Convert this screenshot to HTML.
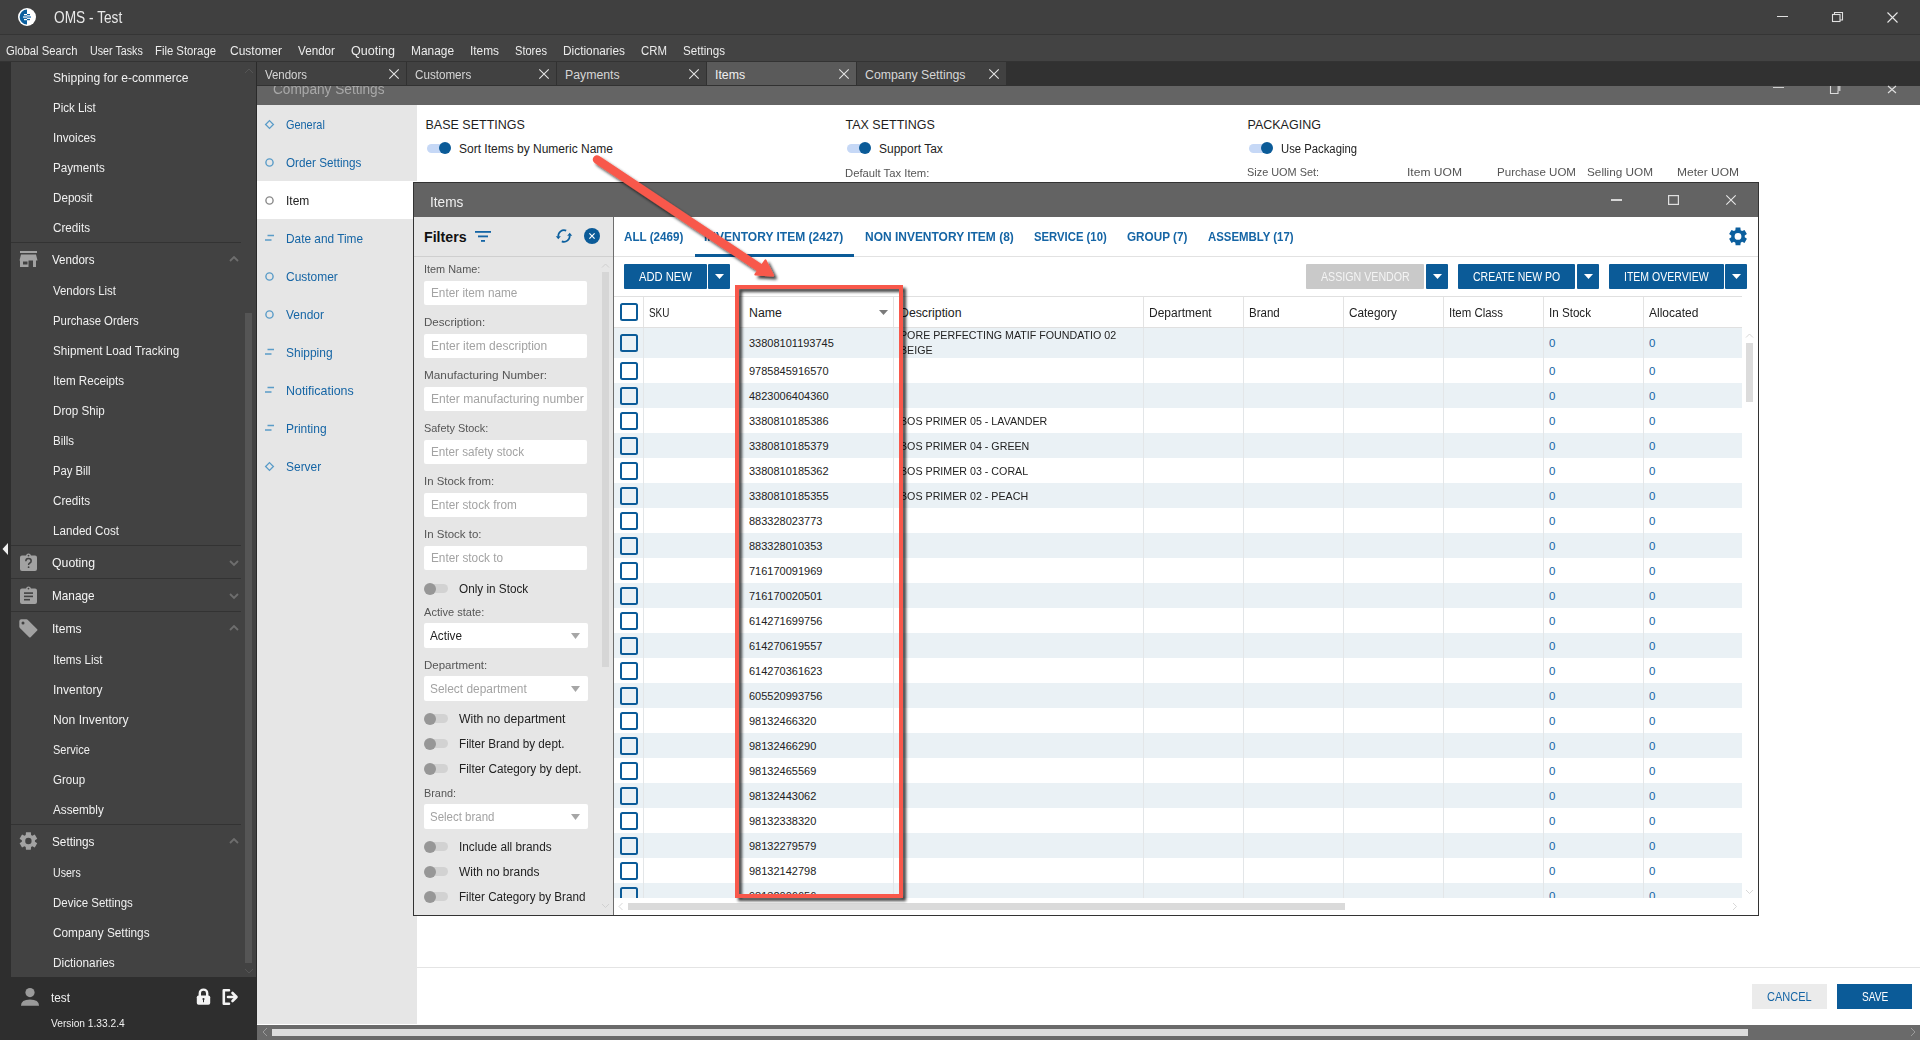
<!DOCTYPE html><html><head><meta charset="utf-8"><style>
html,body{margin:0;padding:0;width:1920px;height:1040px;overflow:hidden;background:#fff;}
body{position:relative;font-family:"Liberation Sans",sans-serif;}
.t{position:absolute;white-space:nowrap;line-height:20px;height:20px;}
.b{position:absolute;}
svg{position:absolute;overflow:visible;}
</style></head><body>
<div class="b" style="left:0px;top:0px;width:1920px;height:34px;background:#404040;"></div>
<div class="b" style="left:0px;top:34px;width:1920px;height:1px;background:#353535;"></div>
<svg style="left:18px;top:8px" width="18" height="18" viewBox="0 0 18 18"><circle cx="9" cy="9" r="9" fill="#ffffff"/><path d="M9 1.6 A7.4 7.4 0 0 0 9 16.4 Z" fill="#0b5f9e"/><rect x="6" y="6" width="3" height="1.3" fill="#fff"/><rect x="9" y="6" width="3" height="1.3" fill="#0b5f9e"/><rect x="5" y="8.3" width="4" height="1.5" fill="#c9dcec"/><rect x="9" y="8.3" width="4" height="1.5" fill="#3f86c0"/><rect x="6" y="10.9" width="3" height="1.3" fill="#fff"/><rect x="9" y="10.9" width="3" height="1.3" fill="#0b5f9e"/></svg>
<div class="t " style="left:54px;top:8.40px;font-size:15.6px;color:#e8e8e8;font-weight:normal;transform:scaleX(0.8785);transform-origin:0 0;">OMS - Test</div>
<div class="b" style="left:1777px;top:16px;width:11px;height:1.2px;background:#e0e0e0;"></div>
<svg style="left:1832px;top:12px" width="11" height="10"><rect x="0.5" y="2.5" width="7.5" height="7" fill="none" stroke="#e0e0e0" stroke-width="1.1"/><path d="M2.5 2.5 V0.5 H10.5 V8 H8" fill="none" stroke="#e0e0e0" stroke-width="1.1"/></svg>
<svg style="left:1887px;top:12px" width="11" height="11"><path d="M0.5 0.5 L10.5 10.5 M10.5 0.5 L0.5 10.5" stroke="#e8e8e8" stroke-width="1.1"/></svg>
<div class="b" style="left:0px;top:35px;width:1920px;height:26px;background:#434343;"></div>
<div class="b" style="left:0px;top:61px;width:1920px;height:1px;background:#333;"></div>
<div class="t " style="left:6px;top:41.10px;font-size:12.5px;color:#ececec;font-weight:normal;transform:scaleX(0.9026);transform-origin:0 0;">Global Search</div>
<div class="t " style="left:90px;top:41.10px;font-size:12.5px;color:#ececec;font-weight:normal;transform:scaleX(0.8574);transform-origin:0 0;">User Tasks</div>
<div class="t " style="left:155px;top:41.10px;font-size:12.5px;color:#ececec;font-weight:normal;transform:scaleX(0.9051);transform-origin:0 0;">File Storage</div>
<div class="t " style="left:230px;top:41.10px;font-size:12.5px;color:#ececec;font-weight:normal;transform:scaleX(0.9597);transform-origin:0 0;">Customer</div>
<div class="t " style="left:298px;top:41.10px;font-size:12.5px;color:#ececec;font-weight:normal;transform:scaleX(0.9339);transform-origin:0 0;">Vendor</div>
<div class="t " style="left:351px;top:41.10px;font-size:12.5px;color:#ececec;font-weight:normal;transform:scaleX(1.0050);transform-origin:0 0;">Quoting</div>
<div class="t " style="left:411px;top:41.10px;font-size:12.5px;color:#ececec;font-weight:normal;transform:scaleX(0.9519);transform-origin:0 0;">Manage</div>
<div class="t " style="left:470px;top:41.10px;font-size:12.5px;color:#ececec;font-weight:normal;transform:scaleX(0.9489);transform-origin:0 0;">Items</div>
<div class="t " style="left:515px;top:41.10px;font-size:12.5px;color:#ececec;font-weight:normal;transform:scaleX(0.8858);transform-origin:0 0;">Stores</div>
<div class="t " style="left:563px;top:41.10px;font-size:12.5px;color:#ececec;font-weight:normal;transform:scaleX(0.9494);transform-origin:0 0;">Dictionaries</div>
<div class="t " style="left:641px;top:41.10px;font-size:12.5px;color:#ececec;font-weight:normal;transform:scaleX(0.9133);transform-origin:0 0;">CRM</div>
<div class="t " style="left:683px;top:41.10px;font-size:12.5px;color:#ececec;font-weight:normal;transform:scaleX(0.9299);transform-origin:0 0;">Settings</div>
<div class="b" style="left:0px;top:62px;width:257px;height:978px;background:#2e2e2e;"></div>
<div class="b" style="left:11px;top:62px;width:231px;height:915px;background:#424242;"></div>
<div class="b" style="left:242px;top:62px;width:14px;height:915px;background:#424242;"></div>
<div class="b" style="left:245px;top:313px;width:7px;height:650px;background:#555555;"></div>
<svg style="left:244px;top:68px" width="10" height="6"><path d="M1 5 L5 1 L9 5" fill="none" stroke="#555" stroke-width="1"/></svg>
<svg style="left:244px;top:968px" width="10" height="6"><path d="M1 1 L5 5 L9 1" fill="none" stroke="#555" stroke-width="1"/></svg>
<svg style="left:2px;top:543px" width="7" height="12"><path d="M6 0 L0.5 6 L6 12 Z" fill="#f0f0f0"/></svg>
<div class="t " style="left:53.2px;top:68.40px;font-size:12.5px;color:#f0f0f0;font-weight:normal;transform:scaleX(0.9711);transform-origin:0 0;">Shipping for e-commerce</div>
<div class="t " style="left:53.2px;top:98.40px;font-size:12.5px;color:#f0f0f0;font-weight:normal;transform:scaleX(0.9197);transform-origin:0 0;">Pick List</div>
<div class="t " style="left:53.2px;top:128.40px;font-size:12.5px;color:#f0f0f0;font-weight:normal;transform:scaleX(0.9334);transform-origin:0 0;">Invoices</div>
<div class="t " style="left:53.2px;top:158.40px;font-size:12.5px;color:#f0f0f0;font-weight:normal;transform:scaleX(0.9320);transform-origin:0 0;">Payments</div>
<div class="t " style="left:53.2px;top:188.40px;font-size:12.5px;color:#f0f0f0;font-weight:normal;transform:scaleX(0.9320);transform-origin:0 0;">Deposit</div>
<div class="t " style="left:53.2px;top:218.40px;font-size:12.5px;color:#f0f0f0;font-weight:normal;transform:scaleX(0.9345);transform-origin:0 0;">Credits</div>
<div class="b" style="left:11px;top:242px;width:230px;height:1px;background:#333333;"></div>
<div class="t " style="left:52px;top:250.30px;font-size:12.8px;color:#f6f6f6;font-weight:normal;transform:scaleX(0.9051);transform-origin:0 0;">Vendors</div>
<svg style="left:19px;top:251px" width="19" height="17" viewBox="0 0 19 17"><rect x="1" y="0" width="17" height="2" fill="#a2a2a2"/><path d="M2 3.5 H17 L18.5 9.5 H0.5 Z" fill="#a2a2a2"/><path d="M1 9 H9.5 V16 H1 Z M4 10.5 V13.5 H8.5 V10.5 Z" fill="#a2a2a2" fill-rule="evenodd"/><rect x="14" y="9" width="3" height="7" fill="#a2a2a2"/></svg>
<svg style="left:229px;top:256px" width="10" height="6"><path d="M1 5 L5 1 L9 5" fill="none" stroke="#6e6e6e" stroke-width="1.8"/></svg>
<div class="t " style="left:53.2px;top:281.40px;font-size:12.5px;color:#f0f0f0;font-weight:normal;transform:scaleX(0.9158);transform-origin:0 0;">Vendors List</div>
<div class="t " style="left:53.2px;top:311.40px;font-size:12.5px;color:#f0f0f0;font-weight:normal;transform:scaleX(0.9081);transform-origin:0 0;">Purchase Orders</div>
<div class="t " style="left:53.2px;top:341.40px;font-size:12.5px;color:#f0f0f0;font-weight:normal;transform:scaleX(0.9361);transform-origin:0 0;">Shipment Load Tracking</div>
<div class="t " style="left:53.2px;top:371.40px;font-size:12.5px;color:#f0f0f0;font-weight:normal;transform:scaleX(0.9304);transform-origin:0 0;">Item Receipts</div>
<div class="t " style="left:53.2px;top:401.40px;font-size:12.5px;color:#f0f0f0;font-weight:normal;transform:scaleX(0.9319);transform-origin:0 0;">Drop Ship</div>
<div class="t " style="left:53.2px;top:431.40px;font-size:12.5px;color:#f0f0f0;font-weight:normal;transform:scaleX(0.9206);transform-origin:0 0;">Bills</div>
<div class="t " style="left:53.2px;top:461.40px;font-size:12.5px;color:#f0f0f0;font-weight:normal;transform:scaleX(0.9021);transform-origin:0 0;">Pay Bill</div>
<div class="t " style="left:53.2px;top:491.40px;font-size:12.5px;color:#f0f0f0;font-weight:normal;transform:scaleX(0.9345);transform-origin:0 0;">Credits</div>
<div class="t " style="left:53.2px;top:521.40px;font-size:12.5px;color:#f0f0f0;font-weight:normal;transform:scaleX(0.9311);transform-origin:0 0;">Landed Cost</div>
<div class="b" style="left:11px;top:545px;width:230px;height:1px;background:#333333;"></div>
<div class="t " style="left:52px;top:553.30px;font-size:12.8px;color:#f6f6f6;font-weight:normal;transform:scaleX(0.9594);transform-origin:0 0;">Quoting</div>
<svg style="left:20px;top:553px" width="17" height="18" viewBox="0 0 17 18"><path d="M0 4.5 Q0 2.5 2 2.5 H6 Q6.5 0.5 8.5 0.5 Q10.5 0.5 11 2.5 H15 Q17 2.5 17 4.5 V16 Q17 18 15 18 H2 Q0 18 0 16 Z" fill="#a2a2a2"/><circle cx="8.5" cy="2.6" r="0.9" fill="#424242"/><path d="M5.8 8.2 Q5.8 5.6 8.5 5.6 Q11.2 5.6 11.2 8 Q11.2 9.4 9.5 10.2 Q8.6 10.7 8.6 12" fill="none" stroke="#424242" stroke-width="1.5"/><circle cx="8.6" cy="14.2" r="0.9" fill="#424242"/></svg>
<svg style="left:229px;top:560px" width="10" height="6"><path d="M1 1 L5 5 L9 1" fill="none" stroke="#6e6e6e" stroke-width="1.8"/></svg>
<div class="b" style="left:11px;top:578px;width:230px;height:1px;background:#333333;"></div>
<div class="t " style="left:52px;top:586.30px;font-size:12.8px;color:#f6f6f6;font-weight:normal;transform:scaleX(0.9190);transform-origin:0 0;">Manage</div>
<svg style="left:20px;top:586px" width="17" height="18" viewBox="0 0 17 18"><path d="M0 4.5 Q0 2.5 2 2.5 H6 Q6.5 0.5 8.5 0.5 Q10.5 0.5 11 2.5 H15 Q17 2.5 17 4.5 V16 Q17 18 15 18 H2 Q0 18 0 16 Z" fill="#a2a2a2"/><circle cx="8.5" cy="2.6" r="0.9" fill="#424242"/><rect x="4" y="6.3" width="9" height="1.6" fill="#424242"/><rect x="4" y="9.6" width="9" height="1.6" fill="#424242"/><rect x="4" y="12.9" width="6" height="1.6" fill="#424242"/></svg>
<svg style="left:229px;top:593px" width="10" height="6"><path d="M1 1 L5 5 L9 1" fill="none" stroke="#6e6e6e" stroke-width="1.8"/></svg>
<div class="b" style="left:11px;top:611px;width:230px;height:1px;background:#333333;"></div>
<div class="t " style="left:52px;top:619.30px;font-size:12.8px;color:#f6f6f6;font-weight:normal;transform:scaleX(0.9429);transform-origin:0 0;">Items</div>
<svg style="left:19px;top:619px" width="19" height="19" viewBox="0 0 19 19"><path d="M0.3 2.3 Q0.3 0.3 2.3 0.3 H7.5 Q8.3 0.3 8.9 0.9 L18.2 10.2 Q18.9 10.9 18.2 11.6 L11.6 18.2 Q10.9 18.9 10.2 18.2 L0.9 8.9 Q0.3 8.3 0.3 7.5 Z" fill="#a2a2a2"/><circle cx="4" cy="4" r="1.5" fill="#424242"/></svg>
<svg style="left:229px;top:625px" width="10" height="6"><path d="M1 5 L5 1 L9 5" fill="none" stroke="#6e6e6e" stroke-width="1.8"/></svg>
<div class="t " style="left:53.2px;top:650.40px;font-size:12.5px;color:#f0f0f0;font-weight:normal;transform:scaleX(0.9255);transform-origin:0 0;">Items List</div>
<div class="t " style="left:53.2px;top:680.40px;font-size:12.5px;color:#f0f0f0;font-weight:normal;transform:scaleX(0.9627);transform-origin:0 0;">Inventory</div>
<div class="t " style="left:53.2px;top:710.40px;font-size:12.5px;color:#f0f0f0;font-weight:normal;transform:scaleX(0.9728);transform-origin:0 0;">Non Inventory</div>
<div class="t " style="left:53.2px;top:740.40px;font-size:12.5px;color:#f0f0f0;font-weight:normal;transform:scaleX(0.8829);transform-origin:0 0;">Service</div>
<div class="t " style="left:53.2px;top:770.40px;font-size:12.5px;color:#f0f0f0;font-weight:normal;transform:scaleX(0.9240);transform-origin:0 0;">Group</div>
<div class="t " style="left:53.2px;top:800.40px;font-size:12.5px;color:#f0f0f0;font-weight:normal;transform:scaleX(0.9376);transform-origin:0 0;">Assembly</div>
<div class="b" style="left:11px;top:824px;width:230px;height:1px;background:#333333;"></div>
<div class="t " style="left:52px;top:832.30px;font-size:12.8px;color:#f6f6f6;font-weight:normal;transform:scaleX(0.9191);transform-origin:0 0;">Settings</div>
<svg style="left:0;top:0" width="1920" height="1040"><path d="M31.08 834.97 L30.83 832.23 L25.97 832.23 L25.72 834.97 L24.52 835.66 L22.02 834.51 L19.59 838.72 L21.84 840.31 L21.84 841.69 L19.59 843.28 L22.02 847.49 L24.52 846.34 L25.72 847.03 L25.97 849.77 L30.83 849.77 L31.08 847.03 L32.28 846.34 L34.78 847.49 L37.21 843.28 L34.96 841.69 L34.96 840.31 L37.21 838.72 L34.78 834.51 L32.28 835.66 Z M31.60 841.00 A3.2 3.2 0 1 0 25.20 841.00 A3.2 3.2 0 1 0 31.60 841.00 Z" fill="#a3a3a3" fill-rule="evenodd"/></svg>
<svg style="left:229px;top:838px" width="10" height="6"><path d="M1 5 L5 1 L9 5" fill="none" stroke="#6e6e6e" stroke-width="1.8"/></svg>
<div class="t " style="left:53.2px;top:863.40px;font-size:12.5px;color:#f0f0f0;font-weight:normal;transform:scaleX(0.8486);transform-origin:0 0;">Users</div>
<div class="t " style="left:53.2px;top:893.40px;font-size:12.5px;color:#f0f0f0;font-weight:normal;transform:scaleX(0.9189);transform-origin:0 0;">Device Settings</div>
<div class="t " style="left:53.2px;top:923.40px;font-size:12.5px;color:#f0f0f0;font-weight:normal;transform:scaleX(0.9458);transform-origin:0 0;">Company Settings</div>
<div class="t " style="left:53.2px;top:953.40px;font-size:12.5px;color:#f0f0f0;font-weight:normal;transform:scaleX(0.9448);transform-origin:0 0;">Dictionaries</div>
<svg style="left:20px;top:987px" width="20" height="20" viewBox="0 0 20 20"><circle cx="10" cy="5.6" r="4.6" fill="#9a9a9a"/><path d="M1 18.5 Q1 12.5 10 12.5 Q19 12.5 19 18.5 V18.8 H1 Z" fill="#9a9a9a"/></svg>
<div class="t " style="left:51px;top:987.80px;font-size:13px;color:#f0f0f0;font-weight:normal;transform:scaleX(0.9068);transform-origin:0 0;">test</div>
<svg style="left:196px;top:988px" width="15" height="17" viewBox="0 0 15 17"><path d="M3.8 8 V5.3 A3.7 3.7 0 0 1 11.2 5.3 V8" fill="none" stroke="#f4f4f4" stroke-width="2.4"/><rect x="0.8" y="7.5" width="13.4" height="9.3" rx="1.8" fill="#f4f4f4"/><circle cx="7.5" cy="11" r="1.1" fill="#2e2e2e"/><rect x="7" y="11" width="1" height="3.2" fill="#2e2e2e"/></svg>
<svg style="left:222px;top:989px" width="17" height="16" viewBox="0 0 17 16"><path d="M7 1.3 H1.8 V14.7 H7" fill="none" stroke="#f4f4f4" stroke-width="2.6" stroke-linejoin="round" stroke-linecap="round"/><path d="M6 8 H13.5" stroke="#f4f4f4" stroke-width="2.6" stroke-linecap="round"/><path d="M10.5 4 L14.5 8 L10.5 12" fill="none" stroke="#f4f4f4" stroke-width="2.6" stroke-linecap="round" stroke-linejoin="round"/></svg>
<div class="t " style="left:51px;top:1013.10px;font-size:10.8px;color:#f0f0f0;font-weight:normal;transform:scaleX(0.9445);transform-origin:0 0;">Version 1.33.2.4</div>
<div class="b" style="left:257px;top:62px;width:1663px;height:24px;background:#313131;"></div>
<div class="b" style="left:256px;top:62px;width:1px;height:962px;background:#2a2a2a;"></div>
<div class="b" style="left:257px;top:62px;width:149px;height:23px;background:#414141;"></div>
<div class="t " style="left:265px;top:65.30px;font-size:12.3px;color:#d6d6d6;font-weight:normal;transform:scaleX(0.9308);transform-origin:0 0;">Vendors</div>
<svg style="left:389px;top:69px" width="10" height="10"><path d="M0.3 0.3 L9.7 9.7 M9.7 0.3 L0.3 9.7" stroke="#e4e4e4" stroke-width="1.1"/></svg>
<div class="b" style="left:407px;top:62px;width:149px;height:23px;background:#414141;"></div>
<div class="t " style="left:415px;top:65.30px;font-size:12.3px;color:#d6d6d6;font-weight:normal;transform:scaleX(0.9470);transform-origin:0 0;">Customers</div>
<svg style="left:539px;top:69px" width="10" height="10"><path d="M0.3 0.3 L9.7 9.7 M9.7 0.3 L0.3 9.7" stroke="#e4e4e4" stroke-width="1.1"/></svg>
<div class="b" style="left:557px;top:62px;width:149px;height:23px;background:#414141;"></div>
<div class="t " style="left:565px;top:65.30px;font-size:12.3px;color:#d6d6d6;font-weight:normal;">Payments</div>
<svg style="left:689px;top:69px" width="10" height="10"><path d="M0.3 0.3 L9.7 9.7 M9.7 0.3 L0.3 9.7" stroke="#e4e4e4" stroke-width="1.1"/></svg>
<div class="b" style="left:707px;top:62px;width:149px;height:23px;background:#5a5a5a;"></div>
<div class="t " style="left:715px;top:65.30px;font-size:12.3px;color:#f0f0f0;font-weight:normal;">Items</div>
<svg style="left:839px;top:69px" width="10" height="10"><path d="M0.3 0.3 L9.7 9.7 M9.7 0.3 L0.3 9.7" stroke="#e4e4e4" stroke-width="1.1"/></svg>
<div class="b" style="left:857px;top:62px;width:149px;height:23px;background:#414141;"></div>
<div class="t " style="left:865px;top:65.30px;font-size:12.3px;color:#d6d6d6;font-weight:normal;">Company Settings</div>
<svg style="left:989px;top:69px" width="10" height="10"><path d="M0.3 0.3 L9.7 9.7 M9.7 0.3 L0.3 9.7" stroke="#e4e4e4" stroke-width="1.1"/></svg>
<div class="b" style="left:257px;top:86px;width:1663px;height:19px;background:#646464;"></div>
<div style="position:absolute;left:257px;top:86px;width:1663px;height:19px;overflow:hidden"><div class="t" style="left:16px;top:-7px;font-size:14px;color:#a8a8a8;transform:scaleX(0.975);transform-origin:0 0">Company Settings</div></div>
<div class="b" style="left:1773px;top:87px;width:11px;height:1.2px;background:#cfcfcf;"></div>
<svg style="left:1830px;top:86px" width="11" height="8"><path d="M0.5 0 V7.5 H8 V5" fill="none" stroke="#dcdcdc" stroke-width="1.1"/><rect x="7.5" y="0" width="3" height="5" fill="#bdbdbd"/></svg>
<svg style="left:1887px;top:86px" width="10" height="7"><path d="M1 0 L9 7 M9 0 L1 7" stroke="#e0e0e0" stroke-width="1.1"/></svg>
<div class="b" style="left:257px;top:105px;width:160px;height:919px;background:#e6e6e6;"></div>
<div class="b" style="left:417px;top:105px;width:1503px;height:919px;background:#ffffff;"></div>
<div class="b" style="left:257px;top:181px;width:160px;height:38px;background:#ffffff;"></div>
<div class="t " style="left:285.5px;top:115.30px;font-size:12.6px;color:#1565a5;font-weight:normal;transform:scaleX(0.8660);transform-origin:0 0;">General</div>
<svg style="left:264px;top:119px" width="11" height="11"><path d="M5.5 1.6 L9.4 5.5 L5.5 9.4 L1.6 5.5 Z" fill="none" stroke="#5a9cc8" stroke-width="1.3"/></svg>
<div class="t " style="left:285.5px;top:153.30px;font-size:12.6px;color:#1565a5;font-weight:normal;transform:scaleX(0.9286);transform-origin:0 0;">Order Settings</div>
<svg style="left:265px;top:158px" width="9" height="9"><circle cx="4.5" cy="4.5" r="3.6" fill="none" stroke="#5a9cc8" stroke-width="1.4"/></svg>
<div class="t " style="left:285.5px;top:191.30px;font-size:12.6px;color:#222222;font-weight:normal;transform:scaleX(0.95);transform-origin:0 0;">Item</div>
<svg style="left:265px;top:196px" width="9" height="9"><circle cx="4.5" cy="4.5" r="3.6" fill="none" stroke="#8a8a8a" stroke-width="1.4"/></svg>
<div class="t " style="left:285.5px;top:229.30px;font-size:12.6px;color:#1565a5;font-weight:normal;transform:scaleX(0.9412);transform-origin:0 0;">Date and Time</div>
<svg style="left:264px;top:234px" width="11" height="8"><path d="M3.5 1.5 H10 M1 6 H7.5" stroke="#5a9cc8" stroke-width="1.5"/></svg>
<div class="t " style="left:285.5px;top:267.30px;font-size:12.6px;color:#1565a5;font-weight:normal;transform:scaleX(0.95);transform-origin:0 0;">Customer</div>
<svg style="left:265px;top:272px" width="9" height="9"><circle cx="4.5" cy="4.5" r="3.6" fill="none" stroke="#5a9cc8" stroke-width="1.4"/></svg>
<div class="t " style="left:285.5px;top:305.30px;font-size:12.6px;color:#1565a5;font-weight:normal;transform:scaleX(0.95);transform-origin:0 0;">Vendor</div>
<svg style="left:265px;top:310px" width="9" height="9"><circle cx="4.5" cy="4.5" r="3.6" fill="none" stroke="#5a9cc8" stroke-width="1.4"/></svg>
<div class="t " style="left:285.5px;top:343.30px;font-size:12.6px;color:#1565a5;font-weight:normal;transform:scaleX(0.95);transform-origin:0 0;">Shipping</div>
<svg style="left:264px;top:348px" width="11" height="8"><path d="M3.5 1.5 H10 M1 6 H7.5" stroke="#5a9cc8" stroke-width="1.5"/></svg>
<div class="t " style="left:285.5px;top:381.30px;font-size:12.6px;color:#1565a5;font-weight:normal;transform:scaleX(0.9869);transform-origin:0 0;">Notifications</div>
<svg style="left:264px;top:386px" width="11" height="8"><path d="M3.5 1.5 H10 M1 6 H7.5" stroke="#5a9cc8" stroke-width="1.5"/></svg>
<div class="t " style="left:285.5px;top:419.30px;font-size:12.6px;color:#1565a5;font-weight:normal;transform:scaleX(0.95);transform-origin:0 0;">Printing</div>
<svg style="left:264px;top:424px" width="11" height="8"><path d="M3.5 1.5 H10 M1 6 H7.5" stroke="#5a9cc8" stroke-width="1.5"/></svg>
<div class="t " style="left:285.5px;top:457.30px;font-size:12.6px;color:#1565a5;font-weight:normal;transform:scaleX(0.95);transform-origin:0 0;">Server</div>
<svg style="left:264px;top:461px" width="11" height="11"><path d="M5.5 1.6 L9.4 5.5 L5.5 9.4 L1.6 5.5 Z" fill="none" stroke="#5a9cc8" stroke-width="1.3"/></svg>
<div class="t " style="left:425.5px;top:115.30px;font-size:12.5px;color:#1e1e1e;font-weight:normal;-webkit-text-stroke:0.25px #1e1e1etransform:scaleX(0.9010);transform-origin:0 0;">BASE SETTINGS</div>
<div class="t " style="left:845.5px;top:115.30px;font-size:12.5px;color:#1e1e1e;font-weight:normal;-webkit-text-stroke:0.25px #1e1e1etransform:scaleX(0.9288);transform-origin:0 0;">TAX SETTINGS</div>
<div class="t " style="left:1247.5px;top:115.30px;font-size:12.5px;color:#1e1e1e;font-weight:normal;-webkit-text-stroke:0.25px #1e1e1etransform:scaleX(0.9469);transform-origin:0 0;">PACKAGING</div>
<div class="b" style="left:427px;top:144px;width:22px;height:9px;border-radius:5px;background:#c6d8f6"></div>
<div class="b" style="left:439px;top:142px;width:12px;height:12px;border-radius:6px;background:#0b5b98"></div>
<div class="t " style="left:459px;top:138.80px;font-size:12px;color:#222;font-weight:normal;">Sort Items by Numeric Name</div>
<div class="b" style="left:847px;top:144px;width:22px;height:9px;border-radius:5px;background:#c6d8f6"></div>
<div class="b" style="left:859px;top:142px;width:12px;height:12px;border-radius:6px;background:#0b5b98"></div>
<div class="t " style="left:879px;top:138.80px;font-size:12px;color:#222;font-weight:normal;">Support Tax</div>
<div class="b" style="left:1249px;top:144px;width:22px;height:9px;border-radius:5px;background:#c6d8f6"></div>
<div class="b" style="left:1261px;top:142px;width:12px;height:12px;border-radius:6px;background:#0b5b98"></div>
<div class="t " style="left:1281px;top:139.30px;font-size:12px;color:#222;font-weight:normal;transform:scaleX(0.9416);transform-origin:0 0;">Use Packaging</div>
<div class="t " style="left:845px;top:162.80px;font-size:11.5px;color:#555;font-weight:normal;transform:scaleX(0.9793);transform-origin:0 0;">Default Tax Item:</div>
<div class="t " style="left:1247px;top:162.10px;font-size:11.5px;color:#555;font-weight:normal;transform:scaleX(0.9468);transform-origin:0 0;">Size UOM Set:</div>
<div class="t " style="left:1407px;top:162.10px;font-size:11.5px;color:#555;font-weight:normal;transform:scaleX(1.0498);transform-origin:0 0;">Item UOM</div>
<div class="t " style="left:1497px;top:162.10px;font-size:11.5px;color:#555;font-weight:normal;transform:scaleX(1.0050);transform-origin:0 0;">Purchase UOM</div>
<div class="t " style="left:1587px;top:162.10px;font-size:11.5px;color:#555;font-weight:normal;transform:scaleX(1.0225);transform-origin:0 0;">Selling UOM</div>
<div class="t " style="left:1677px;top:162.10px;font-size:11.5px;color:#555;font-weight:normal;transform:scaleX(1.0434);transform-origin:0 0;">Meter UOM</div>
<div class="b" style="left:417px;top:967px;width:1503px;height:1px;background:#e4e4e4;"></div>
<div class="b" style="left:1752px;top:984px;width:75px;height:25px;background:#ebebeb;"></div>
<div class="t " style="left:1767px;top:987.30px;font-size:12.5px;color:#1565a5;font-weight:normal;transform:scaleX(0.8815);transform-origin:0 0;">CANCEL</div>
<div class="b" style="left:1837px;top:984px;width:75px;height:25px;background:#0b5b98;"></div>
<div class="t " style="left:1862px;top:987.30px;font-size:12.5px;color:#fff;font-weight:normal;transform:scaleX(0.8112);transform-origin:0 0;">SAVE</div>
<div class="b" style="left:257px;top:1025px;width:1663px;height:15px;background:#6a6a6a;"></div>
<div class="b" style="left:272px;top:1029px;width:1476px;height:7px;background:#dcdcdc;"></div>
<svg style="left:262px;top:1027px" width="6" height="10"><path d="M5 1 L1 5 L5 9" fill="none" stroke="#9a9a9a" stroke-width="1"/></svg>
<svg style="left:1910px;top:1027px" width="6" height="10"><path d="M1 1 L5 5 L1 9" fill="none" stroke="#9a9a9a" stroke-width="1"/></svg>
<div class="b" style="left:413px;top:182px;width:1346px;height:734px;background:#333333;"></div>
<div class="b" style="left:414px;top:183px;width:1344px;height:34px;background:#636363;"></div>
<div class="t " style="left:430.2px;top:192.30px;font-size:14.5px;color:#f0f0f0;font-weight:normal;transform:scaleX(0.9394);transform-origin:0 0;">Items</div>
<div class="b" style="left:1611px;top:199.2px;width:10.5px;height:1.6px;background:#d6d6d6;"></div>
<svg style="left:1668px;top:195px" width="11" height="10"><rect x="0.6" y="0.6" width="9.8" height="8.8" fill="none" stroke="#e0e0e0" stroke-width="1.2"/></svg>
<svg style="left:1725.5px;top:195px" width="10" height="10"><path d="M0.3 0.3 L9.7 9.7 M9.7 0.3 L0.3 9.7" stroke="#e8e8e8" stroke-width="1.1"/></svg>
<div class="b" style="left:414px;top:217px;width:199px;height:698px;background:#e6e6e6;"></div>
<div class="b" style="left:613px;top:217px;width:1px;height:698px;background:#6e6e6e;"></div>
<div class="b" style="left:414px;top:256px;width:199px;height:1px;background:#cfcfcf;"></div>
<div class="t " style="left:424px;top:226.80px;font-size:14.2px;color:#111;font-weight:bold;">Filters</div>
<svg style="left:475px;top:231px" width="16" height="12"><rect x="0" y="0" width="16" height="1.8" fill="#1565a5"/><rect x="3" y="4.5" width="10" height="1.8" fill="#1565a5"/><rect x="6" y="9" width="4" height="1.8" fill="#1565a5"/></svg>
<svg style="left:556px;top:228px" width="16" height="16" viewBox="0 0 16 16"><path d="M10.2 2.6 A5.8 5.8 0 0 0 2.3 8.6" fill="none" stroke="#0b5f9e" stroke-width="1.7"/><path d="M5.8 13.4 A5.8 5.8 0 0 0 13.7 7.4" fill="none" stroke="#0b5f9e" stroke-width="1.7"/><path d="M-0.2 8.2 H4.8 L2.3 11.2 Z" fill="#0b5f9e"/><path d="M11.2 7.8 H16.2 L13.7 4.8 Z" fill="#0b5f9e"/></svg>
<svg style="left:584px;top:228px" width="16" height="16"><circle cx="8" cy="8" r="8" fill="#0b5b98"/><path d="M5.4 5.4 L10.6 10.6 M10.6 5.4 L5.4 10.6" stroke="#fff" stroke-width="1.2"/></svg>
<div class="b" style="left:602px;top:272px;width:7px;height:395px;background:#d6d6d6;"></div>
<svg style="left:601px;top:263px" width="9" height="5"><path d="M1 4.5 L4.5 1 L8 4.5" fill="none" stroke="#d0d0d0" stroke-width="1"/></svg>
<svg style="left:601px;top:903px" width="9" height="5"><path d="M1 1 L4.5 4.5 L8 1" fill="none" stroke="#d0d0d0" stroke-width="1"/></svg>
<div class="t " style="left:424.2px;top:259.10px;font-size:11.8px;color:#555;font-weight:normal;transform:scaleX(0.9235);transform-origin:0 0;">Item Name:</div>
<div class="b" style="left:424px;top:281px;width:163px;height:24px;background:#fff;border-radius:2px"></div>
<div class="t " style="left:430.5px;top:283.10px;font-size:12px;color:#a3a3a3;font-weight:normal;transform:scaleX(0.9814);transform-origin:0 0;">Enter item name</div>
<div class="t " style="left:424.2px;top:312.10px;font-size:11.8px;color:#555;font-weight:normal;transform:scaleX(0.9826);transform-origin:0 0;">Description:</div>
<div class="b" style="left:424px;top:334px;width:163px;height:24px;background:#fff;border-radius:2px"></div>
<div class="t " style="left:430.5px;top:336.10px;font-size:12px;color:#a3a3a3;font-weight:normal;transform:scaleX(1.0013);transform-origin:0 0;">Enter item description</div>
<div class="t " style="left:424.2px;top:365.10px;font-size:11.8px;color:#555;font-weight:normal;transform:scaleX(0.9986);transform-origin:0 0;">Manufacturing Number:</div>
<div class="b" style="left:424px;top:387px;width:163px;height:24px;background:#fff;border-radius:2px"></div>
<div class="t " style="left:430.5px;top:389.10px;font-size:12px;color:#a3a3a3;font-weight:normal;transform:scaleX(1.0041);transform-origin:0 0;">Enter manufacturing number</div>
<div class="t " style="left:424.2px;top:418.10px;font-size:11.8px;color:#555;font-weight:normal;transform:scaleX(0.9251);transform-origin:0 0;">Safety Stock:</div>
<div class="b" style="left:424px;top:440px;width:163px;height:24px;background:#fff;border-radius:2px"></div>
<div class="t " style="left:430.5px;top:442.10px;font-size:12px;color:#a3a3a3;font-weight:normal;transform:scaleX(0.9751);transform-origin:0 0;">Enter safety stock</div>
<div class="t " style="left:424.2px;top:471.10px;font-size:11.8px;color:#555;font-weight:normal;transform:scaleX(0.9654);transform-origin:0 0;">In Stock from:</div>
<div class="b" style="left:424px;top:493px;width:163px;height:24px;background:#fff;border-radius:2px"></div>
<div class="t " style="left:430.5px;top:495.10px;font-size:12px;color:#a3a3a3;font-weight:normal;transform:scaleX(0.9816);transform-origin:0 0;">Enter stock from</div>
<div class="t " style="left:424.2px;top:524.10px;font-size:11.8px;color:#555;font-weight:normal;transform:scaleX(0.9744);transform-origin:0 0;">In Stock to:</div>
<div class="b" style="left:424px;top:546px;width:163px;height:24px;background:#fff;border-radius:2px"></div>
<div class="t " style="left:430.5px;top:548.10px;font-size:12px;color:#a3a3a3;font-weight:normal;transform:scaleX(0.9814);transform-origin:0 0;">Enter stock to</div>
<div class="b" style="left:425px;top:584.3px;width:23px;height:9px;border-radius:5px;background:#d2d2d2"></div>
<div class="b" style="left:424px;top:582.8px;width:12px;height:12px;border-radius:6px;background:#979797"></div>
<div class="t " style="left:458.5px;top:579.30px;font-size:12px;color:#222;font-weight:normal;transform:scaleX(0.9796);transform-origin:0 0;">Only in Stock</div>
<div class="t " style="left:424.2px;top:601.90px;font-size:11.8px;color:#555;font-weight:normal;transform:scaleX(0.9377);transform-origin:0 0;">Active state:</div>
<div class="b" style="left:424px;top:623px;width:164px;height:25px;background:#fff;border-radius:2px"></div>
<div class="t " style="left:429.5px;top:625.80px;font-size:12px;color:#222;font-weight:normal;transform:scaleX(0.9793);transform-origin:0 0;">Active</div>
<svg style="left:571px;top:633px" width="9" height="6"><path d="M0 0 H9 L4.5 6 Z" fill="#a6a6a6"/></svg>
<div class="t " style="left:424.2px;top:654.90px;font-size:11.8px;color:#555;font-weight:normal;transform:scaleX(0.9744);transform-origin:0 0;">Department:</div>
<div class="b" style="left:424px;top:676px;width:164px;height:25px;background:#fff;border-radius:2px"></div>
<div class="t " style="left:429.5px;top:678.80px;font-size:12px;color:#a3a3a3;font-weight:normal;transform:scaleX(0.9934);transform-origin:0 0;">Select department</div>
<svg style="left:571px;top:686px" width="9" height="6"><path d="M0 0 H9 L4.5 6 Z" fill="#a6a6a6"/></svg>
<div class="b" style="left:425px;top:714.3px;width:23px;height:9px;border-radius:5px;background:#d2d2d2"></div>
<div class="b" style="left:424px;top:712.8px;width:12px;height:12px;border-radius:6px;background:#979797"></div>
<div class="t " style="left:458.5px;top:709.30px;font-size:12px;color:#222;font-weight:normal;transform:scaleX(1.0170);transform-origin:0 0;">With no department</div>
<div class="b" style="left:425px;top:739.3px;width:23px;height:9px;border-radius:5px;background:#d2d2d2"></div>
<div class="b" style="left:424px;top:737.8px;width:12px;height:12px;border-radius:6px;background:#979797"></div>
<div class="t " style="left:458.5px;top:734.30px;font-size:12px;color:#222;font-weight:normal;transform:scaleX(0.9754);transform-origin:0 0;">Filter Brand by dept.</div>
<div class="b" style="left:425px;top:764.3px;width:23px;height:9px;border-radius:5px;background:#d2d2d2"></div>
<div class="b" style="left:424px;top:762.8px;width:12px;height:12px;border-radius:6px;background:#979797"></div>
<div class="t " style="left:458.5px;top:759.30px;font-size:12px;color:#222;font-weight:normal;transform:scaleX(0.9814);transform-origin:0 0;">Filter Category by dept.</div>
<div class="t " style="left:424.2px;top:782.90px;font-size:11.8px;color:#555;font-weight:normal;transform:scaleX(0.9207);transform-origin:0 0;">Brand:</div>
<div class="b" style="left:424px;top:804px;width:164px;height:25px;background:#fff;border-radius:2px"></div>
<div class="t " style="left:429.5px;top:806.80px;font-size:12px;color:#a3a3a3;font-weight:normal;transform:scaleX(0.9558);transform-origin:0 0;">Select brand</div>
<svg style="left:571px;top:814px" width="9" height="6"><path d="M0 0 H9 L4.5 6 Z" fill="#a6a6a6"/></svg>
<div class="b" style="left:425px;top:842.3px;width:23px;height:9px;border-radius:5px;background:#d2d2d2"></div>
<div class="b" style="left:424px;top:840.8px;width:12px;height:12px;border-radius:6px;background:#979797"></div>
<div class="t " style="left:458.5px;top:837.30px;font-size:12px;color:#222;font-weight:normal;transform:scaleX(0.9845);transform-origin:0 0;">Include all brands</div>
<div class="b" style="left:425px;top:867.3px;width:23px;height:9px;border-radius:5px;background:#d2d2d2"></div>
<div class="b" style="left:424px;top:865.8px;width:12px;height:12px;border-radius:6px;background:#979797"></div>
<div class="t " style="left:458.5px;top:862.30px;font-size:12px;color:#222;font-weight:normal;transform:scaleX(0.9962);transform-origin:0 0;">With no brands</div>
<div class="b" style="left:425px;top:892.3px;width:23px;height:9px;border-radius:5px;background:#d2d2d2"></div>
<div class="b" style="left:424px;top:890.8px;width:12px;height:12px;border-radius:6px;background:#979797"></div>
<div class="t " style="left:458.5px;top:887.30px;font-size:12px;color:#222;font-weight:normal;transform:scaleX(0.9719);transform-origin:0 0;">Filter Category by Brand</div>
<div class="b" style="left:614px;top:217px;width:1144px;height:698px;background:#ffffff;"></div>
<div class="t " style="left:624.2px;top:227.10px;font-size:12px;color:#1565a5;font-weight:bold;transform:scaleX(0.9715);transform-origin:0 0;">ALL (2469)</div>
<div class="t " style="left:704px;top:227.10px;font-size:12px;color:#1565a5;font-weight:bold;transform:scaleX(1.0010);transform-origin:0 0;">INVENTORY ITEM (2427)</div>
<div class="t " style="left:864.5px;top:227.10px;font-size:12px;color:#1565a5;font-weight:bold;transform:scaleX(0.9977);transform-origin:0 0;">NON INVENTORY ITEM (8)</div>
<div class="t " style="left:1034px;top:227.10px;font-size:12px;color:#1565a5;font-weight:bold;transform:scaleX(0.9425);transform-origin:0 0;">SERVICE (10)</div>
<div class="t " style="left:1127px;top:227.10px;font-size:12px;color:#1565a5;font-weight:bold;transform:scaleX(0.9757);transform-origin:0 0;">GROUP (7)</div>
<div class="t " style="left:1207.5px;top:227.10px;font-size:12px;color:#1565a5;font-weight:bold;transform:scaleX(0.9507);transform-origin:0 0;">ASSEMBLY (17)</div>
<div class="b" style="left:614px;top:256px;width:1144px;height:1px;background:#e2e2e2;"></div>
<div class="b" style="left:695px;top:254px;width:159px;height:2.5px;background:#0b5b98;"></div>
<svg style="left:0;top:0" width="1920" height="1040"><path d="M1740.66 230.14 L1740.38 227.51 L1735.62 227.51 L1735.34 230.14 L1733.91 230.97 L1731.49 229.89 L1729.11 234.02 L1731.25 235.57 L1731.25 237.23 L1729.11 238.78 L1731.49 242.91 L1733.91 241.83 L1735.34 242.66 L1735.62 245.29 L1740.38 245.29 L1740.66 242.66 L1742.09 241.83 L1744.51 242.91 L1746.89 238.78 L1744.75 237.23 L1744.75 235.57 L1746.89 234.02 L1744.51 229.89 L1742.09 230.97 Z M1741.40 236.40 A3.4 3.4 0 1 0 1734.60 236.40 A3.4 3.4 0 1 0 1741.40 236.40 Z" fill="#0b5f9e" fill-rule="evenodd"/></svg>
<div class="b" style="left:624px;top:264px;width:83px;height:25px;background:#0b5b98;border-radius:1px"></div>
<div class="t " style="left:639px;top:267.30px;font-size:12.5px;color:#fff;font-weight:normal;transform:scaleX(0.8945);transform-origin:0 0;">ADD NEW</div>
<div class="b" style="left:708px;top:264px;width:22px;height:25px;background:#0b5b98;border-radius:1px"></div>
<svg style="left:714.5px;top:274px" width="9" height="5"><path d="M0 0 H9 L4.5 5 Z" fill="#fff"/></svg>
<div class="b" style="left:1306px;top:264px;width:118px;height:25px;background:#c9c9c9;border-radius:1px"></div>
<div class="t " style="left:1321px;top:267.30px;font-size:12.5px;color:#f4f4f4;font-weight:normal;transform:scaleX(0.8523);transform-origin:0 0;">ASSIGN VENDOR</div>
<div class="b" style="left:1426px;top:264px;width:22px;height:25px;background:#0b5b98;border-radius:1px"></div>
<svg style="left:1432.5px;top:274px" width="9" height="5"><path d="M0 0 H9 L4.5 5 Z" fill="#fff"/></svg>
<div class="b" style="left:1458px;top:264px;width:117px;height:25px;background:#0b5b98;border-radius:1px"></div>
<div class="t " style="left:1473px;top:267.30px;font-size:12.5px;color:#fff;font-weight:normal;transform:scaleX(0.8389);transform-origin:0 0;">CREATE NEW PO</div>
<div class="b" style="left:1577px;top:264px;width:22px;height:25px;background:#0b5b98;border-radius:1px"></div>
<svg style="left:1583.5px;top:274px" width="9" height="5"><path d="M0 0 H9 L4.5 5 Z" fill="#fff"/></svg>
<div class="b" style="left:1609px;top:264px;width:115px;height:25px;background:#0b5b98;border-radius:1px"></div>
<div class="t " style="left:1624px;top:267.30px;font-size:12.5px;color:#fff;font-weight:normal;transform:scaleX(0.8420);transform-origin:0 0;">ITEM OVERVIEW</div>
<div class="b" style="left:1725px;top:264px;width:22px;height:25px;background:#0b5b98;border-radius:1px"></div>
<svg style="left:1731.5px;top:274px" width="9" height="5"><path d="M0 0 H9 L4.5 5 Z" fill="#fff"/></svg>
<div class="b" style="left:614px;top:296px;width:1128px;height:1px;background:#e0e0e0;"></div>
<div class="b" style="left:614px;top:327px;width:1128px;height:1px;background:#e0e0e0;"></div>
<div style="position:absolute;left:614px;top:328px;width:1128px;height:570px;overflow:hidden">
<div class="b" style="left:0;top:0px;width:1128px;height:30px;background:#eaf1f5"></div>
<div class="b" style="left:6px;top:6.0px;width:14px;height:14px;border:2px solid #0b5b98;border-radius:2.5px"></div>
<div class="t" style="left:135px;top:5.0px;font-size:11px;color:#222">33808101193745</div>
<div class="t" style="left:286px;top:0.0px;font-size:11.8px;color:#222;line-height:15px;height:30px;transform:scaleX(0.905);transform-origin:0 0">PORE PERFECTING MATIF FOUNDATIO 02<br>BEIGE</div>
<div class="t" style="left:935px;top:5.0px;font-size:11.5px;color:#1565a5">0</div>
<div class="t" style="left:1035px;top:5.0px;font-size:11.5px;color:#1565a5">0</div>
<div class="b" style="left:0;top:30px;width:1128px;height:25px;background:#ffffff"></div>
<div class="b" style="left:6px;top:33.5px;width:14px;height:14px;border:2px solid #0b5b98;border-radius:2.5px"></div>
<div class="t" style="left:135px;top:32.5px;font-size:11px;color:#222">9785845916570</div>
<div class="t" style="left:935px;top:32.5px;font-size:11.5px;color:#1565a5">0</div>
<div class="t" style="left:1035px;top:32.5px;font-size:11.5px;color:#1565a5">0</div>
<div class="b" style="left:0;top:55px;width:1128px;height:25px;background:#eaf1f5"></div>
<div class="b" style="left:6px;top:58.5px;width:14px;height:14px;border:2px solid #0b5b98;border-radius:2.5px"></div>
<div class="t" style="left:135px;top:57.5px;font-size:11px;color:#222">4823006404360</div>
<div class="t" style="left:935px;top:57.5px;font-size:11.5px;color:#1565a5">0</div>
<div class="t" style="left:1035px;top:57.5px;font-size:11.5px;color:#1565a5">0</div>
<div class="b" style="left:0;top:80px;width:1128px;height:25px;background:#ffffff"></div>
<div class="b" style="left:6px;top:83.5px;width:14px;height:14px;border:2px solid #0b5b98;border-radius:2.5px"></div>
<div class="t" style="left:135px;top:82.5px;font-size:11px;color:#222">3380810185386</div>
<div class="t" style="left:286px;top:83.0px;font-size:11.8px;color:#222;transform:scaleX(0.905);transform-origin:0 0">BOS PRIMER 05 - LAVANDER</div>
<div class="t" style="left:935px;top:82.5px;font-size:11.5px;color:#1565a5">0</div>
<div class="t" style="left:1035px;top:82.5px;font-size:11.5px;color:#1565a5">0</div>
<div class="b" style="left:0;top:105px;width:1128px;height:25px;background:#eaf1f5"></div>
<div class="b" style="left:6px;top:108.5px;width:14px;height:14px;border:2px solid #0b5b98;border-radius:2.5px"></div>
<div class="t" style="left:135px;top:107.5px;font-size:11px;color:#222">3380810185379</div>
<div class="t" style="left:286px;top:108.0px;font-size:11.8px;color:#222;transform:scaleX(0.905);transform-origin:0 0">BOS PRIMER 04 - GREEN</div>
<div class="t" style="left:935px;top:107.5px;font-size:11.5px;color:#1565a5">0</div>
<div class="t" style="left:1035px;top:107.5px;font-size:11.5px;color:#1565a5">0</div>
<div class="b" style="left:0;top:130px;width:1128px;height:25px;background:#ffffff"></div>
<div class="b" style="left:6px;top:133.5px;width:14px;height:14px;border:2px solid #0b5b98;border-radius:2.5px"></div>
<div class="t" style="left:135px;top:132.5px;font-size:11px;color:#222">3380810185362</div>
<div class="t" style="left:286px;top:133.0px;font-size:11.8px;color:#222;transform:scaleX(0.905);transform-origin:0 0">BOS PRIMER 03 - CORAL</div>
<div class="t" style="left:935px;top:132.5px;font-size:11.5px;color:#1565a5">0</div>
<div class="t" style="left:1035px;top:132.5px;font-size:11.5px;color:#1565a5">0</div>
<div class="b" style="left:0;top:155px;width:1128px;height:25px;background:#eaf1f5"></div>
<div class="b" style="left:6px;top:158.5px;width:14px;height:14px;border:2px solid #0b5b98;border-radius:2.5px"></div>
<div class="t" style="left:135px;top:157.5px;font-size:11px;color:#222">3380810185355</div>
<div class="t" style="left:286px;top:158.0px;font-size:11.8px;color:#222;transform:scaleX(0.905);transform-origin:0 0">BOS PRIMER 02 - PEACH</div>
<div class="t" style="left:935px;top:157.5px;font-size:11.5px;color:#1565a5">0</div>
<div class="t" style="left:1035px;top:157.5px;font-size:11.5px;color:#1565a5">0</div>
<div class="b" style="left:0;top:180px;width:1128px;height:25px;background:#ffffff"></div>
<div class="b" style="left:6px;top:183.5px;width:14px;height:14px;border:2px solid #0b5b98;border-radius:2.5px"></div>
<div class="t" style="left:135px;top:182.5px;font-size:11px;color:#222">883328023773</div>
<div class="t" style="left:935px;top:182.5px;font-size:11.5px;color:#1565a5">0</div>
<div class="t" style="left:1035px;top:182.5px;font-size:11.5px;color:#1565a5">0</div>
<div class="b" style="left:0;top:205px;width:1128px;height:25px;background:#eaf1f5"></div>
<div class="b" style="left:6px;top:208.5px;width:14px;height:14px;border:2px solid #0b5b98;border-radius:2.5px"></div>
<div class="t" style="left:135px;top:207.5px;font-size:11px;color:#222">883328010353</div>
<div class="t" style="left:935px;top:207.5px;font-size:11.5px;color:#1565a5">0</div>
<div class="t" style="left:1035px;top:207.5px;font-size:11.5px;color:#1565a5">0</div>
<div class="b" style="left:0;top:230px;width:1128px;height:25px;background:#ffffff"></div>
<div class="b" style="left:6px;top:233.5px;width:14px;height:14px;border:2px solid #0b5b98;border-radius:2.5px"></div>
<div class="t" style="left:135px;top:232.5px;font-size:11px;color:#222">716170091969</div>
<div class="t" style="left:935px;top:232.5px;font-size:11.5px;color:#1565a5">0</div>
<div class="t" style="left:1035px;top:232.5px;font-size:11.5px;color:#1565a5">0</div>
<div class="b" style="left:0;top:255px;width:1128px;height:25px;background:#eaf1f5"></div>
<div class="b" style="left:6px;top:258.5px;width:14px;height:14px;border:2px solid #0b5b98;border-radius:2.5px"></div>
<div class="t" style="left:135px;top:257.5px;font-size:11px;color:#222">716170020501</div>
<div class="t" style="left:935px;top:257.5px;font-size:11.5px;color:#1565a5">0</div>
<div class="t" style="left:1035px;top:257.5px;font-size:11.5px;color:#1565a5">0</div>
<div class="b" style="left:0;top:280px;width:1128px;height:25px;background:#ffffff"></div>
<div class="b" style="left:6px;top:283.5px;width:14px;height:14px;border:2px solid #0b5b98;border-radius:2.5px"></div>
<div class="t" style="left:135px;top:282.5px;font-size:11px;color:#222">614271699756</div>
<div class="t" style="left:935px;top:282.5px;font-size:11.5px;color:#1565a5">0</div>
<div class="t" style="left:1035px;top:282.5px;font-size:11.5px;color:#1565a5">0</div>
<div class="b" style="left:0;top:305px;width:1128px;height:25px;background:#eaf1f5"></div>
<div class="b" style="left:6px;top:308.5px;width:14px;height:14px;border:2px solid #0b5b98;border-radius:2.5px"></div>
<div class="t" style="left:135px;top:307.5px;font-size:11px;color:#222">614270619557</div>
<div class="t" style="left:935px;top:307.5px;font-size:11.5px;color:#1565a5">0</div>
<div class="t" style="left:1035px;top:307.5px;font-size:11.5px;color:#1565a5">0</div>
<div class="b" style="left:0;top:330px;width:1128px;height:25px;background:#ffffff"></div>
<div class="b" style="left:6px;top:333.5px;width:14px;height:14px;border:2px solid #0b5b98;border-radius:2.5px"></div>
<div class="t" style="left:135px;top:332.5px;font-size:11px;color:#222">614270361623</div>
<div class="t" style="left:935px;top:332.5px;font-size:11.5px;color:#1565a5">0</div>
<div class="t" style="left:1035px;top:332.5px;font-size:11.5px;color:#1565a5">0</div>
<div class="b" style="left:0;top:355px;width:1128px;height:25px;background:#eaf1f5"></div>
<div class="b" style="left:6px;top:358.5px;width:14px;height:14px;border:2px solid #0b5b98;border-radius:2.5px"></div>
<div class="t" style="left:135px;top:357.5px;font-size:11px;color:#222">605520993756</div>
<div class="t" style="left:935px;top:357.5px;font-size:11.5px;color:#1565a5">0</div>
<div class="t" style="left:1035px;top:357.5px;font-size:11.5px;color:#1565a5">0</div>
<div class="b" style="left:0;top:380px;width:1128px;height:25px;background:#ffffff"></div>
<div class="b" style="left:6px;top:383.5px;width:14px;height:14px;border:2px solid #0b5b98;border-radius:2.5px"></div>
<div class="t" style="left:135px;top:382.5px;font-size:11px;color:#222">98132466320</div>
<div class="t" style="left:935px;top:382.5px;font-size:11.5px;color:#1565a5">0</div>
<div class="t" style="left:1035px;top:382.5px;font-size:11.5px;color:#1565a5">0</div>
<div class="b" style="left:0;top:405px;width:1128px;height:25px;background:#eaf1f5"></div>
<div class="b" style="left:6px;top:408.5px;width:14px;height:14px;border:2px solid #0b5b98;border-radius:2.5px"></div>
<div class="t" style="left:135px;top:407.5px;font-size:11px;color:#222">98132466290</div>
<div class="t" style="left:935px;top:407.5px;font-size:11.5px;color:#1565a5">0</div>
<div class="t" style="left:1035px;top:407.5px;font-size:11.5px;color:#1565a5">0</div>
<div class="b" style="left:0;top:430px;width:1128px;height:25px;background:#ffffff"></div>
<div class="b" style="left:6px;top:433.5px;width:14px;height:14px;border:2px solid #0b5b98;border-radius:2.5px"></div>
<div class="t" style="left:135px;top:432.5px;font-size:11px;color:#222">98132465569</div>
<div class="t" style="left:935px;top:432.5px;font-size:11.5px;color:#1565a5">0</div>
<div class="t" style="left:1035px;top:432.5px;font-size:11.5px;color:#1565a5">0</div>
<div class="b" style="left:0;top:455px;width:1128px;height:25px;background:#eaf1f5"></div>
<div class="b" style="left:6px;top:458.5px;width:14px;height:14px;border:2px solid #0b5b98;border-radius:2.5px"></div>
<div class="t" style="left:135px;top:457.5px;font-size:11px;color:#222">98132443062</div>
<div class="t" style="left:935px;top:457.5px;font-size:11.5px;color:#1565a5">0</div>
<div class="t" style="left:1035px;top:457.5px;font-size:11.5px;color:#1565a5">0</div>
<div class="b" style="left:0;top:480px;width:1128px;height:25px;background:#ffffff"></div>
<div class="b" style="left:6px;top:483.5px;width:14px;height:14px;border:2px solid #0b5b98;border-radius:2.5px"></div>
<div class="t" style="left:135px;top:482.5px;font-size:11px;color:#222">98132338320</div>
<div class="t" style="left:935px;top:482.5px;font-size:11.5px;color:#1565a5">0</div>
<div class="t" style="left:1035px;top:482.5px;font-size:11.5px;color:#1565a5">0</div>
<div class="b" style="left:0;top:505px;width:1128px;height:25px;background:#eaf1f5"></div>
<div class="b" style="left:6px;top:508.5px;width:14px;height:14px;border:2px solid #0b5b98;border-radius:2.5px"></div>
<div class="t" style="left:135px;top:507.5px;font-size:11px;color:#222">98132279579</div>
<div class="t" style="left:935px;top:507.5px;font-size:11.5px;color:#1565a5">0</div>
<div class="t" style="left:1035px;top:507.5px;font-size:11.5px;color:#1565a5">0</div>
<div class="b" style="left:0;top:530px;width:1128px;height:25px;background:#ffffff"></div>
<div class="b" style="left:6px;top:533.5px;width:14px;height:14px;border:2px solid #0b5b98;border-radius:2.5px"></div>
<div class="t" style="left:135px;top:532.5px;font-size:11px;color:#222">98132142798</div>
<div class="t" style="left:935px;top:532.5px;font-size:11.5px;color:#1565a5">0</div>
<div class="t" style="left:1035px;top:532.5px;font-size:11.5px;color:#1565a5">0</div>
<div class="b" style="left:0;top:555px;width:1128px;height:25px;background:#eaf1f5"></div>
<div class="b" style="left:6px;top:558.5px;width:14px;height:14px;border:2px solid #0b5b98;border-radius:2.5px"></div>
<div class="t" style="left:135px;top:557.5px;font-size:11px;color:#222">98132006656</div>
<div class="t" style="left:935px;top:557.5px;font-size:11.5px;color:#1565a5">0</div>
<div class="t" style="left:1035px;top:557.5px;font-size:11.5px;color:#1565a5">0</div>
<div class="b" style="left:29px;top:0;width:1px;height:570px;background:#e3e6e8"></div>
<div class="b" style="left:125px;top:0;width:1px;height:570px;background:#e3e6e8"></div>
<div class="b" style="left:279px;top:0;width:1px;height:570px;background:#e3e6e8"></div>
<div class="b" style="left:529px;top:0;width:1px;height:570px;background:#e3e6e8"></div>
<div class="b" style="left:629px;top:0;width:1px;height:570px;background:#e3e6e8"></div>
<div class="b" style="left:729px;top:0;width:1px;height:570px;background:#e3e6e8"></div>
<div class="b" style="left:829px;top:0;width:1px;height:570px;background:#e3e6e8"></div>
<div class="b" style="left:929px;top:0;width:1px;height:570px;background:#e3e6e8"></div>
<div class="b" style="left:1029px;top:0;width:1px;height:570px;background:#e3e6e8"></div>
</div>
<div class="b" style="left:643px;top:297px;width:1px;height:30px;background:#e3e3e3;"></div>
<div class="b" style="left:739px;top:297px;width:1px;height:30px;background:#e3e3e3;"></div>
<div class="b" style="left:893px;top:297px;width:1px;height:30px;background:#e3e3e3;"></div>
<div class="b" style="left:1143px;top:297px;width:1px;height:30px;background:#e3e3e3;"></div>
<div class="b" style="left:1243px;top:297px;width:1px;height:30px;background:#e3e3e3;"></div>
<div class="b" style="left:1343px;top:297px;width:1px;height:30px;background:#e3e3e3;"></div>
<div class="b" style="left:1443px;top:297px;width:1px;height:30px;background:#e3e3e3;"></div>
<div class="b" style="left:1543px;top:297px;width:1px;height:30px;background:#e3e3e3;"></div>
<div class="b" style="left:1643px;top:297px;width:1px;height:30px;background:#e3e3e3;"></div>
<div class="b" style="left:620px;top:303px;width:14px;height:14px;background:transparent;border:2px solid #0b5b98;border-radius:2.5px"></div>
<div class="t " style="left:649px;top:302.80px;font-size:12.3px;color:#222;font-weight:normal;transform:scaleX(0.8068);transform-origin:0 0;">SKU</div>
<div class="t " style="left:749px;top:302.80px;font-size:12.3px;color:#222;font-weight:normal;">Name</div>
<div class="t " style="left:900px;top:302.80px;font-size:12.3px;color:#222;font-weight:normal;">Description</div>
<div class="t " style="left:1149px;top:302.80px;font-size:12.3px;color:#222;font-weight:normal;transform:scaleX(0.9759);transform-origin:0 0;">Department</div>
<div class="t " style="left:1249px;top:302.80px;font-size:12.3px;color:#222;font-weight:normal;transform:scaleX(0.9356);transform-origin:0 0;">Brand</div>
<div class="t " style="left:1349px;top:302.80px;font-size:12.3px;color:#222;font-weight:normal;transform:scaleX(0.9580);transform-origin:0 0;">Category</div>
<div class="t " style="left:1449px;top:302.80px;font-size:12.3px;color:#222;font-weight:normal;transform:scaleX(0.9298);transform-origin:0 0;">Item Class</div>
<div class="t " style="left:1549px;top:302.80px;font-size:12.3px;color:#222;font-weight:normal;transform:scaleX(0.9454);transform-origin:0 0;">In Stock</div>
<div class="t " style="left:1649px;top:302.80px;font-size:12.3px;color:#222;font-weight:normal;transform:scaleX(0.9765);transform-origin:0 0;">Allocated</div>
<svg style="left:879px;top:310px" width="9" height="5"><path d="M0 0 H9 L4.5 5 Z" fill="#7a7a7a"/></svg>
<div class="b" style="left:1746px;top:343px;width:7px;height:59px;background:#dcdcdc;"></div>
<svg style="left:1745px;top:333px" width="9" height="5"><path d="M1 4.5 L4.5 1 L8 4.5" fill="none" stroke="#d8d8d8" stroke-width="1"/></svg>
<svg style="left:1745px;top:889px" width="9" height="5"><path d="M1 1 L4.5 4.5 L8 1" fill="none" stroke="#d8d8d8" stroke-width="1"/></svg>
<div class="b" style="left:628px;top:903px;width:717px;height:7px;background:#dadada;"></div>
<svg style="left:618px;top:902px" width="5" height="9"><path d="M4.5 1 L1 4.5 L4.5 8" fill="none" stroke="#d8d8d8" stroke-width="1"/></svg>
<svg style="left:1732px;top:902px" width="5" height="9"><path d="M1 1 L4.5 4.5 L1 8" fill="none" stroke="#d8d8d8" stroke-width="1"/></svg>
<svg style="left:0;top:0" width="1920" height="1040"><defs><filter id="sh" x="-20%" y="-20%" width="140%" height="140%"><feGaussianBlur in="SourceAlpha" stdDeviation="1.5"/><feOffset dx="2.5" dy="2.5"/><feComponentTransfer><feFuncA type="linear" slope="0.75"/></feComponentTransfer><feMerge><feMergeNode/><feMergeNode in="SourceGraphic"/></feMerge></filter></defs><g filter="url(#sh)"><rect x="737" y="287" width="164" height="609" fill="none" stroke="#f8594b" stroke-width="4"/></g><g filter="url(#sh)"><path d="M597 159.5 L760 268" stroke="#f8594b" stroke-width="8.5" stroke-linecap="round"/><path d="M773 275.5 L765.5 260.5 L755.5 274.5 Z" fill="#f8594b" stroke="#f8594b" stroke-width="2.2" stroke-linejoin="round"/></g></svg>
</body></html>
